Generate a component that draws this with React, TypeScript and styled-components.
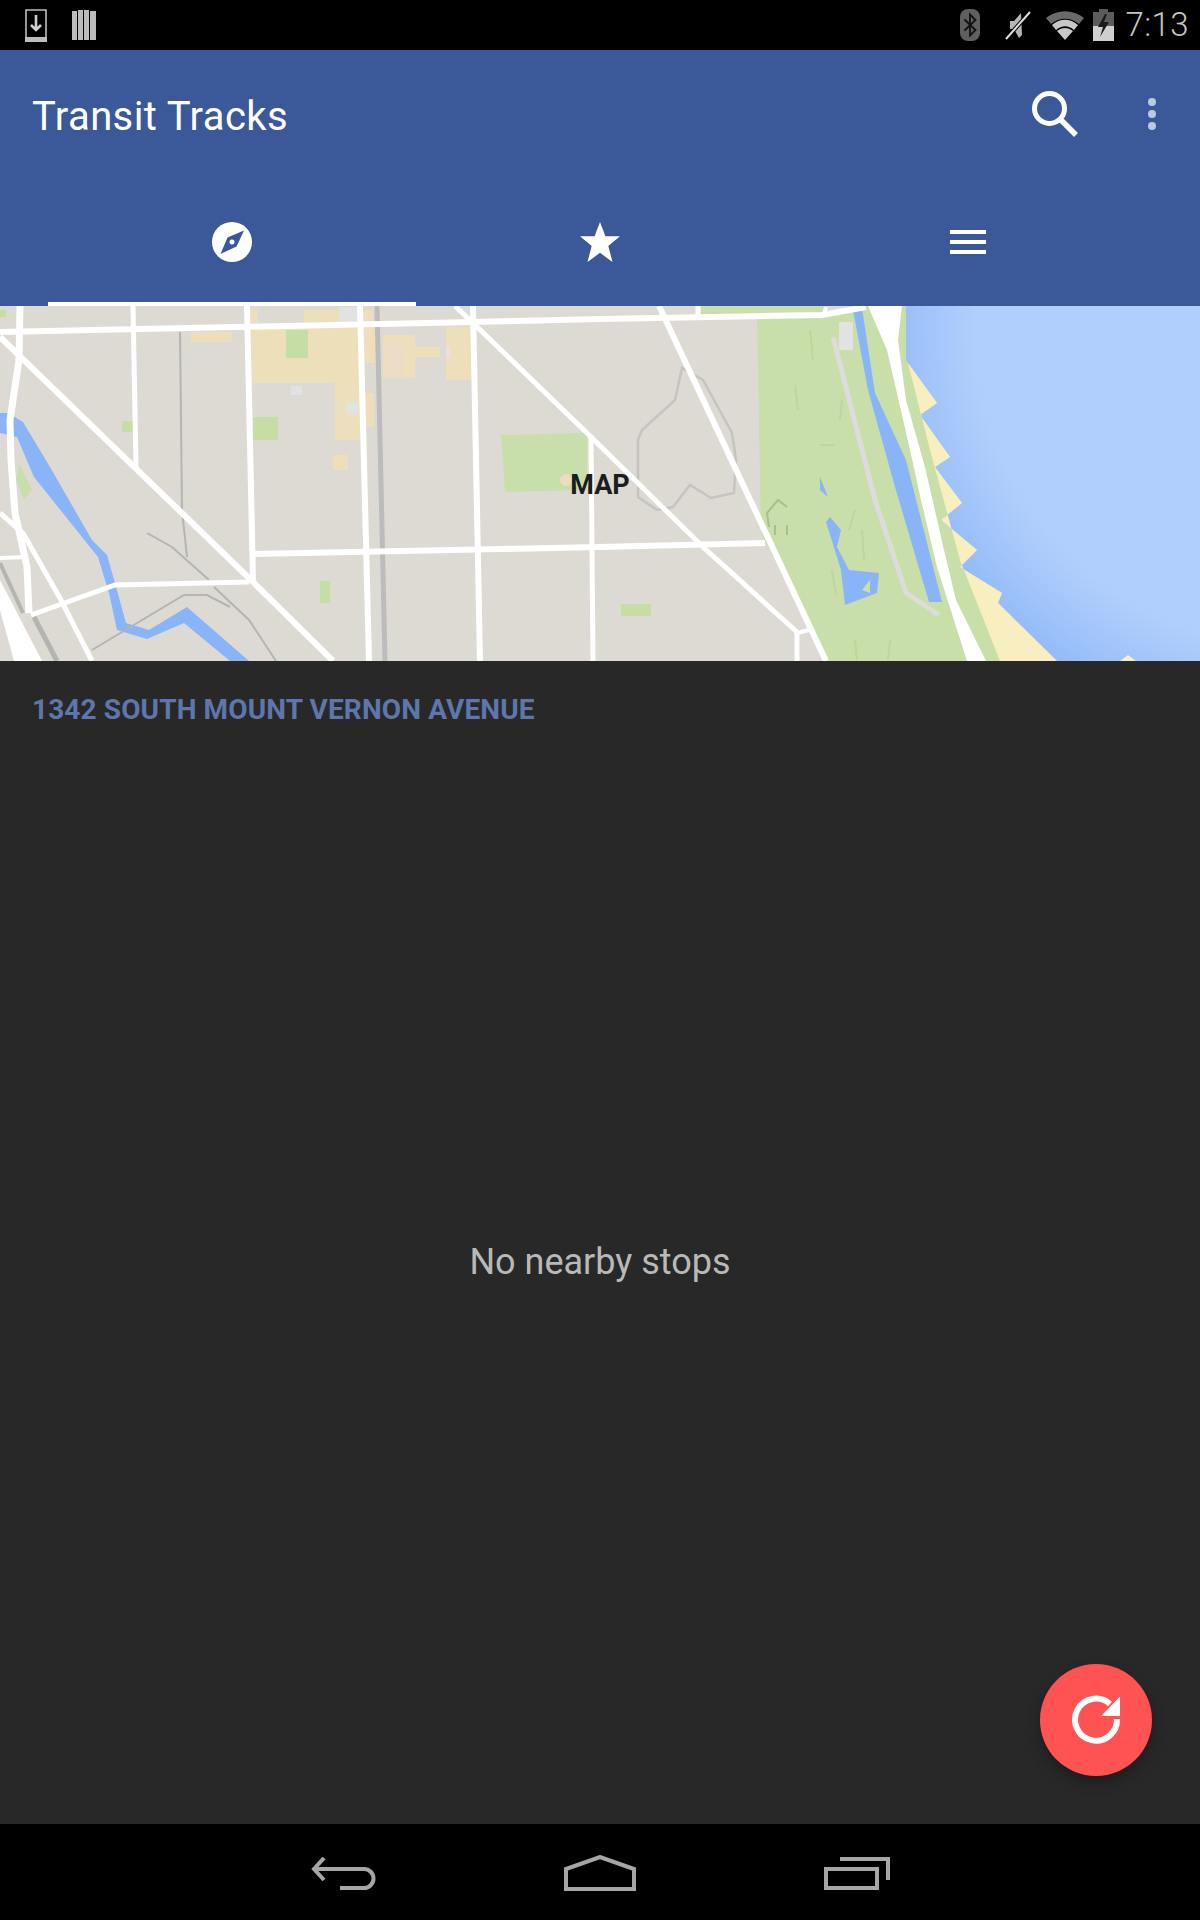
import React from 'react';
import styled, { createGlobalStyle } from 'styled-components';

const GlobalStyle = createGlobalStyle`
  html, body {
    margin: 0;
    padding: 0;
    background: #000;
    font-family: Roboto, "Liberation Sans", sans-serif;
  }
`;

const Screen = styled.div`
  position: relative;
  width: 1200px;
  height: 1920px;
  display: flex;
  flex-direction: column;
  overflow: hidden;
`;

const StatusBar = styled.div`
  height: 50px;
  flex: none;
  background: #000;
  display: flex;
  align-items: center;
  justify-content: space-between;
  padding: 0 11px 0 25px;
  box-sizing: border-box;
`;

const StatusGroup = styled.div`
  display: flex;
  align-items: center;
`;

const StatusSlot = styled.span<{ $left: number }>`
  display: flex;
  margin-left: ${p => p.$left}px;
`;

const StatusTime = styled.span`
  font-size: 33px;
  font-weight: 300;
  color: #c4c4c4;
  line-height: 50px;
  margin-left: 12px;
  letter-spacing: 0.4px;
`;

const AppBar = styled.header`
  flex: none;
  background: #3b5998;
  color: #fff;
`;

const Toolbar = styled.div`
  height: 128px;
  display: flex;
  align-items: center;
  padding: 0 44px 0 32px;
`;

const Title = styled.h1`
  flex: 1;
  margin: 4px 0 0;
  font-size: 40px;
  font-weight: 400;
  letter-spacing: 0.4px;
`;

const ToolbarActions = styled.div`
  display: flex;
  align-items: center;
  gap: 70px;
`;

const Tabs = styled.nav`
  height: 128px;
  display: flex;
  padding: 0 48px;
`;

const Tab = styled.div<{ $active?: boolean }>`
  position: relative;
  flex: 1;
  display: flex;
  align-items: center;
  justify-content: center;
  &::after {
    content: '';
    display: ${p => (p.$active ? 'block' : 'none')};
    position: absolute;
    left: 0;
    right: 0;
    bottom: 0;
    height: 4px;
    background: #fff;
  }
`;

const MapPane = styled.section`
  position: relative;
  flex: none;
  height: 355px;
  display: flex;
  align-items: center;
  justify-content: center;
  background: #dcdad3;
  overflow: hidden;
`;

const MapArt = styled.svg`
  position: absolute;
  inset: 0;
`;

const MapLabel = styled.span`
  position: relative;
  font-size: 27px;
  font-weight: 700;
  color: #1c1c1c;
  margin-top: 2px;
`;

const Content = styled.main`
  flex: 1;
  background: #282828;
  display: flex;
  flex-direction: column;
`;

const Address = styled.h2`
  margin: 0;
  padding: 34px 32px 0;
  font-size: 28px;
  line-height: 30px;
  font-weight: 700;
  letter-spacing: 0.12px;
  color: #5d77ad;
`;

const EmptyState = styled.div`
  flex: 1;
  display: flex;
  align-items: center;
  justify-content: center;
  padding-bottom: 26px;
  font-size: 36px;
  color: #b9b9b9;
`;

const Fab = styled.button`
  position: absolute;
  left: 1040px;
  top: 1664px;
  width: 112px;
  height: 112px;
  padding: 0;
  border: 0;
  border-radius: 50%;
  background: #ff5252;
  box-shadow: 0 6px 14px rgba(0, 0, 0, 0.3);
  display: flex;
  align-items: center;
  justify-content: center;
`;

const NavBar = styled.footer`
  flex: none;
  height: 96px;
  background: #000;
  display: flex;
  align-items: center;
  justify-content: center;
  gap: 188px;
  padding-top: 2px;
  box-sizing: border-box;
`;

const DownloadIcon = () => (
  <svg width="22" height="33" viewBox="0 0 22 33">
    <path d="M1 1h20v31H1z" fill="none" stroke="#bdbdbd" strokeWidth="1.6" />
    <path d="M0 28h22v5H0z" fill="#bdbdbd" />
    <path d="M11 6v14M6 16l5 5 5-5" fill="none" stroke="#d0d0d0" strokeWidth="2.6" />
  </svg>
);

const BarsIcon = () => (
  <svg width="24" height="30" viewBox="0 0 24 30">
    <path d="M0 1h5v29H0zM6 0h5v30H6zM12 0h5v30h-5zM18 1h6v29h-6z" fill="#bcbcbc" />
  </svg>
);

const BluetoothIcon = () => (
  <svg width="20" height="32" viewBox="0 0 20 32">
    <rect width="20" height="32" rx="8" fill="#5f5f5f" />
    <path d="M4.500 10.500l11 10.500-5.500 5.500V5.500l5.500 5.500-11 10.500" fill="none" stroke="#111" strokeWidth="1.8" />
  </svg>
);

const MuteIcon = () => (
  <svg width="26" height="30" viewBox="0 0 26 30">
    <path d="M5 11h4l7-8 1 22-3 3-5-9H5z" fill="#b4b4b4" />
    <path d="M1 29L25 2" stroke="#000" strokeWidth="4" />
    <path d="M1 29L25 2" stroke="#e0e0e0" strokeWidth="2" />
  </svg>
);

const WifiIcon = () => (
  <svg width="38" height="29" viewBox="0 0 38 29">
    <path d="M0 7C11-2 27-2 38 7L33 13C24 6 14 6 5 13z" fill="#6a6a6a" />
    <path d="M6 14C14 7 24 7 32 14L28 19C22 14 16 14 10 19z" fill="#c8c8c8" />
    <path d="M11 20C16 16 22 16 27 20L19 29z" fill="#c8c8c8" />
  </svg>
);

const BatteryIcon = () => (
  <svg width="21" height="32" viewBox="0 0 21 32">
    <path d="M6 0h9v3h6v14H0V3h6z" fill="#5c5c5c" />
    <path d="M0 17h21v15H0z" fill="#cfcfcf" />
    <path d="M12 5L5 18h5l-3 10 9-15h-5l3-8z" fill="#1a1a1a" />
  </svg>
);

const SearchIcon = () => (
  <svg width="46" height="46" viewBox="0 0 46 46">
    <circle cx="17.500" cy="17.500" r="15" fill="none" stroke="#fff" strokeWidth="5" />
    <path d="M28 28l16 16" stroke="#fff" strokeWidth="5.500" />
  </svg>
);

const MoreIcon = () => (
  <svg width="8" height="32" viewBox="0 0 8 32">
    <circle cx="4" cy="4" r="4" fill="#bccbe3" />
    <circle cx="4" cy="16" r="4" fill="#bccbe3" />
    <circle cx="4" cy="28" r="4" fill="#bccbe3" />
  </svg>
);

const CompassIcon = () => (
  <svg width="40" height="40" viewBox="0 0 40 40">
    <circle cx="20" cy="20" r="20" fill="#fff" />
    <path d="M32 8.500L24.500 24.500 8.500 32 15.500 15.500z" fill="#3b5998" />
    <circle cx="20" cy="20" r="2.500" fill="#fff" />
  </svg>
);

const StarIcon = () => (
  <svg width="40" height="40" viewBox="0 0 40 40">
    <path d="M20 0l5.400 14.300H40L28.300 24 32.500 40 20 30.800 7.500 40 11.700 24 0 14.300h14.600z" fill="#fff" />
  </svg>
);

const MenuIcon = () => (
  <svg width="36" height="24" viewBox="0 0 36 24">
    <path d="M0 0h36v4H0zM0 10h36v4H0zM0 20h36v4H0z" fill="#fff" />
  </svg>
);

const RefreshIcon = () => (
  <svg width="56" height="56" viewBox="0 0 56 56">
    <path d="M42 12A21 21 0 1 0 49 27" fill="none" stroke="#fff" strokeWidth="6" />
    <path d="M52 4.500V24H33z" fill="#fff" />
  </svg>
);

const BackIcon = () => (
  <svg width="65" height="33" viewBox="0 0 65 33">
    <path d="M13 1L3 12l10 11M3 12h50a9.500 9.500 0 0 1 0 19H29" fill="none" stroke="#a6a6a6" strokeWidth="4" />
  </svg>
);

const HomeIcon = () => (
  <svg width="72" height="36" viewBox="0 0 72 36">
    <path d="M2 34h68V14L36 2 2 14z" fill="none" stroke="#a6a6a6" strokeWidth="4" />
  </svg>
);

const RecentsIcon = () => (
  <svg width="66" height="33" viewBox="0 0 66 33">
    <path d="M2 12h51v19H2zM16 2h48v21" fill="none" stroke="#a6a6a6" strokeWidth="4" />
  </svg>
);

const tanBlocks = [
  [251, 328, 109, 55], [335, 383, 25, 57], [364, 393, 10, 34], [364, 328, 15, 35],
  [383, 335, 32, 43], [415, 347, 25, 10], [446, 327, 25, 53], [191, 332, 41, 10],
  [304, 310, 35, 12], [249, 310, 9, 13], [364, 310, 9, 12], [333, 455, 15, 15],
];
const greenBlocks = [
  [286, 330, 22, 28], [253, 417, 25, 23], [122, 421, 11, 11], [320, 581, 10, 22],
  [621, 604, 30, 12], [0, 310, 6, 7], [15, 637, 10, 24],
];
const paleBlocks = [
  [339, 307, 19, 15], [291, 386, 11, 9], [346, 403, 12, 12], [446, 347, 4, 10], [839, 322, 14, 28],
];
const roads: [string, number][] = [
  ['0,332 474,322 600,319 822,315 866,307', 6],
  ['20,306 19,360 10,420 11,460 15,513 27,567 29,613', 7],
  ['133,306 136,467', 5],
  ['0,337 251,580 333,661', 6],
  ['247,306 253,580', 6],
  ['360,306 369,661', 6],
  ['473,306 480,661', 6],
  ['455,306 473,323 587,433 703,547 797,632', 5],
  ['591,435 593,661', 5],
  ['254,554 600,547 765,543', 6],
  ['659,306 826,661', 6],
  ['31,615 115,585 249,582', 5],
  ['0,513 23,533 61,600 92,661', 5],
  ['0,558 27,557', 4],
  ['797,633 809,630', 4],
  ['797,633 797,661', 5],
  ['698,306 698,315', 5],
  ['826,307 824,315', 4],
];
const rails: [string, number][] = [
  ['180,332 182,510 187,557', 2],
  ['147,533 172,547 209,580', 2],
  ['214,587 249,620 276,661', 2],
  ['92,650 184,595 207,595 230,607', 2],
  ['0,563 23,613', 4],
  ['34,617 57,661', 5],
];
const parkMarks = [
  'M810 330l3 30', 'M795 385l3 25', 'M842 400l-2 20', 'M820 445h14', 'M855 510l-6 20',
  'M832 570l4 25', 'M862 530l2 30', 'M855 640l2 20', 'M890 640l-2 20',
];

const MapDrawing = () => (
  <MapArt width="1200" height="355" viewBox="0 306 1200 355">
    <defs>
      <radialGradient id="lake" gradientUnits="userSpaceOnUse" cx="1290" cy="330" r="420">
        <stop offset="0.75" stopColor="#b1cffc" />
        <stop offset="1" stopColor="#8fb8f8" />
      </radialGradient>
      <filter id="soft">
        <feGaussianBlur stdDeviation="0.6" />
      </filter>
    </defs>
    <g filter="url(#soft)">
      <rect x="895" y="306" width="305" height="355" fill="url(#lake)" />
      <path d="M757 318L866 306H906V360L908 363 937 403 920 415 950 457 935 467 962 503 941 520 977 550 960 567 1002 593 998 603 1057 661H826L761 533z" fill="#c9dfa9" />
      <path d="M701 306H826V313L701 316z" fill="#c9dfa9" />
      <path d="M908 363L937 403 920 415 950 457 935 467 962 503 941 520 977 550 960 567 1002 593 998 603 1057 661H1000L960 560 930 450z" fill="#f8eec0" />
      <path d="M1120 661L1128 655 1136 661z" fill="#f8eec0" />
      {parkMarks.map(d => <path key={d} d={d} stroke="#bed5a0" strokeWidth="2" fill="none" />)}
      {tanBlocks.map(([x, y, w, h]) => <rect key={`t${x}${y}`} x={x} y={y} width={w} height={h} fill="#ecdfb9" />)}
      <rect x="385" y="345" width="20" height="32" fill="#ecdcc6" />
      {greenBlocks.map(([x, y, w, h]) => <rect key={`g${x}${y}`} x={x} y={y} width={w} height={h} fill="#c6dea5" />)}
      <path d="M501 435L587 433V490L505 492z" fill="#c9dfa9" />
      <path d="M19 463L32 490 24 500 16 480z" fill="#c9dfa9" />
      {paleBlocks.map(([x, y, w, h]) => <rect key={`p${x}${y}`} x={x} y={y} width={w} height={h} fill="#e2e2e2" />)}
      <path d="M377 306L385 661" stroke="#bcbcbc" strokeWidth="5" />
      <path d="M682 368L675 400 642 430 638 440 638 497 657 510 673 507 690 485 711 498 734 493 736 460 732 433 703 380z" fill="none" stroke="#c6c4bf" strokeWidth="2.500" />
      <path d="M769 527L767 513 778 500 787 507M775 525V535M787 525V535" fill="none" stroke="#a9bd8e" strokeWidth="2" />
      <path d="M833 337L875 500 906 593 939 615" fill="none" stroke="#dcdcdc" strokeWidth="5" />
      <path d="M853 310L862 308 875 393 906 460 942 602 929 602 895 487 868 390z" fill="#8ab4f8" />
      <path d="M820 477L828 497 820 490zM826 522L830 517 841 530 837 547 849 570 879 573 877 593 845 605 841 570z" fill="#8ab4f8" />
      <path d="M870 580L862 590 870 593z" fill="#c9dfa9" />
      <path d="M0 413H8L23 422 50 467 92 540 107 555 115 583 126 623 149 630 187 607 249 661H230L184 623 147 639 117 630 109 593 98 557 34 477 17 437 0 433z" fill="#8ab4f8" />
      {rails.map(([pts, w]) => <polyline key={pts} points={pts} fill="none" stroke="#b4b4b0" strokeWidth={w} />)}
      {roads.map(([pts, w]) => <polyline key={pts} points={pts} fill="none" stroke="#fff" strokeWidth={w} />)}
      <path d="M0 580L42 661H14L0 610z" fill="#fff" />
      <path d="M868 306H902L898 340 906 400 925 467 944 550 956 600 986 661H967L937 567 921 500 910 450 887 350z" fill="#fff" />
      <circle cx="566" cy="480" r="6" fill="#ecdcc6" />
    </g>
  </MapArt>
);

export default function App() {
  return (
    <Screen>
      <GlobalStyle />
      <StatusBar>
        <StatusGroup>
          <DownloadIcon />
          <StatusSlot $left={25}>
            <BarsIcon />
          </StatusSlot>
        </StatusGroup>
        <StatusGroup>
          <BluetoothIcon />
          <StatusSlot $left={25}>
            <MuteIcon />
          </StatusSlot>
          <StatusSlot $left={15}>
            <WifiIcon />
          </StatusSlot>
          <StatusSlot $left={9}>
            <BatteryIcon />
          </StatusSlot>
          <StatusTime>7:13</StatusTime>
        </StatusGroup>
      </StatusBar>
      <AppBar>
        <Toolbar>
          <Title>Transit Tracks</Title>
          <ToolbarActions>
            <SearchIcon />
            <MoreIcon />
          </ToolbarActions>
        </Toolbar>
        <Tabs>
          <Tab $active>
            <CompassIcon />
          </Tab>
          <Tab>
            <StarIcon />
          </Tab>
          <Tab>
            <MenuIcon />
          </Tab>
        </Tabs>
      </AppBar>
      <MapPane>
        <MapDrawing />
        <MapLabel>MAP</MapLabel>
      </MapPane>
      <Content>
        <Address>1342 SOUTH MOUNT VERNON AVENUE</Address>
        <EmptyState>No nearby stops</EmptyState>
      </Content>
      <Fab aria-label="Refresh">
        <RefreshIcon />
      </Fab>
      <NavBar>
        <BackIcon />
        <HomeIcon />
        <RecentsIcon />
      </NavBar>
    </Screen>
  );
}
